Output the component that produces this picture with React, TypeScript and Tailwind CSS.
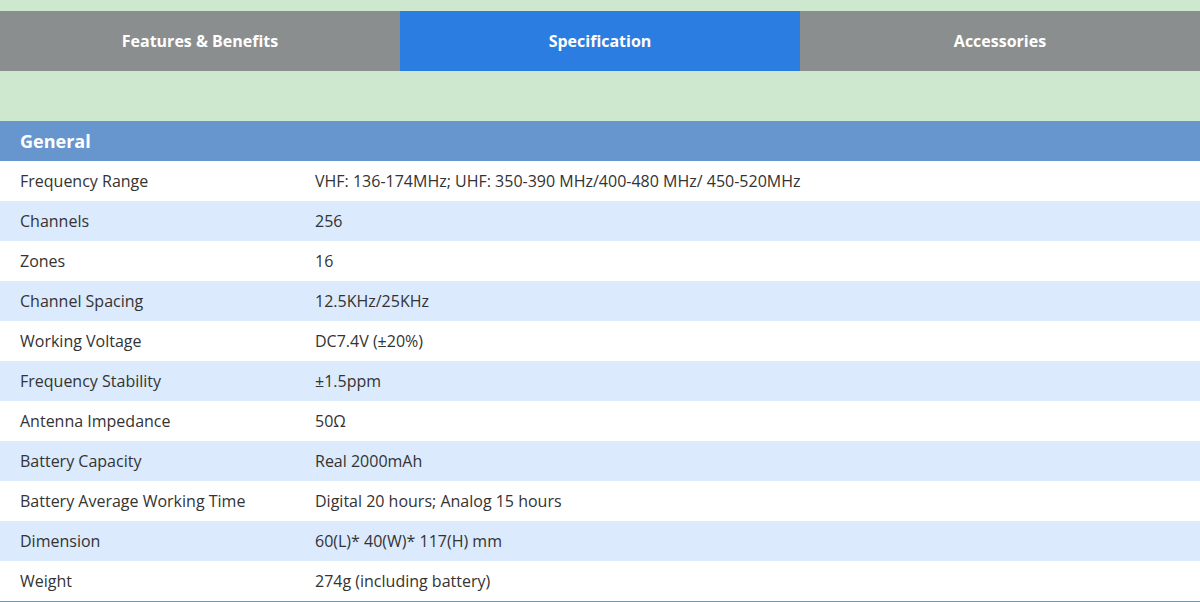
const tabs = [
  { label: 'Features & Benefits', active: false },
  { label: 'Specification', active: true },
  { label: 'Accessories', active: false },
];

const specs: [string, string][] = [
  ['Frequency Range', 'VHF: 136-174MHz; UHF: 350-390 MHz/400-480 MHz/ 450-520MHz'],
  ['Channels', '256'],
  ['Zones', '16'],
  ['Channel Spacing', '12.5KHz/25KHz'],
  ['Working Voltage', 'DC7.4V (±20%)'],
  ['Frequency Stability', '±1.5ppm'],
  ['Antenna Impedance', '50Ω'],
  ['Battery Capacity', 'Real 2000mAh'],
  ['Battery Average Working Time', 'Digital 20 hours; Analog 15 hours'],
  ['Dimension', '60(L)* 40(W)* 117(H) mm'],
  ['Weight', '274g (including battery)'],
];

export default function App() {
  return (
    <div className="w-[1200px] h-[602px] bg-[#cde8cf] pt-[11px] font-['Open_Sans',sans-serif] text-[#333]">
      <div className="flex h-[60px]">
        {tabs.map(t => (
          <div
            key={t.label}
            className={`flex-1 flex items-center justify-center text-white font-bold text-[16px] ${t.active ? 'bg-[#2b7de1]' : 'bg-[#8a8e8e]'}`}
          >
            {t.label}
          </div>
        ))}
      </div>
      <div className="h-[50px]" />
      <div className="bg-white border-b border-[#6b94c4]">
        <div className="h-[40px] bg-[#6796cf] flex items-center px-5 text-white font-bold text-[18px]">
          General
        </div>
        {specs.map(([k, v], i) => (
          <div key={k} className={`h-[40px] flex items-center text-[16px] ${i % 2 === 1 ? 'bg-[#dbeafc]' : 'bg-white'}`}>
            <div className="w-[315px] pl-5">{k}</div>
            <div>{v}</div>
          </div>
        ))}
      </div>
    </div>
  );
}
